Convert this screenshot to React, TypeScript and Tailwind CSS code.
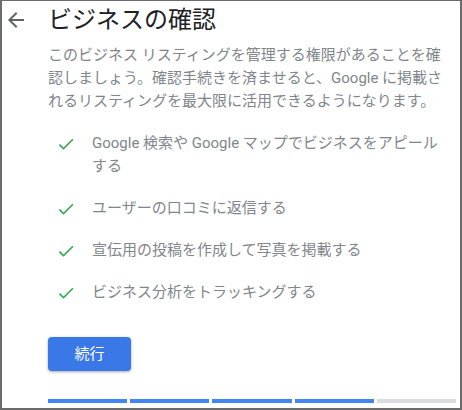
import { ReactNode } from 'react';

const font = { fontFamily: "Roboto, 'Noto Sans CJK JP', sans-serif" };

const CheckIcon = () => (
  <svg viewBox="0 0 24 24" className="h-5 w-5 shrink-0 fill-[#34a853]">
    <path d="M9 16.17L4.83 12l-1.42 1.41L9 19 21 7l-1.41-1.41z" />
  </svg>
);

const BackArrow = () => (
  <svg viewBox="0 0 24 24" className="h-6 w-6 fill-[#5f6368]">
    <path d="M20 11H7.83l5.59-5.59L12 4l-8 8 8 8 1.41-1.41L7.83 13H20v-2z" />
  </svg>
);

const items: ReactNode[] = [
  <>
    Google 検索や Google マップでビジネスをアピール
    <br />
    する
  </>,
  'ユーザーの口コミに返信する',
  '宣伝用の投稿を作成して写真を掲載する',
  'ビジネス分析をトラッキングする',
];

const steps = [true, true, true, true, false];

export default function App() {
  return (
    <div
      style={font}
      className="w-[462px] h-[410px] bg-white border-2 border-t border-[#6b6b6b] overflow-hidden"
    >
      {/* header */}
      <div className="flex items-center pt-[3px]">
        <div className="w-[46px] pl-[2px] flex items-center">
          <BackArrow />
        </div>
        <h1 className="text-[24px] leading-8 text-[#202124]">ビジネスの確認</h1>
      </div>

      <div className="pl-[46px]">
        <p className="mt-[8px] text-[15px] leading-[23px] text-[#80868b] whitespace-nowrap">
          このビジネス リスティングを管理する権限があることを確
          <br />
          認しましょう。確認手続きを済ませると、Google に掲載さ
          <br />
          れるリスティングを最大限に活用できるようになります。
        </p>

        <ul className="mt-[19px] flex flex-col gap-[19px]">
          {items.map((item, i) => (
            <li key={i} className="flex items-start">
              <div className="w-[44px] pl-[8px] pt-[2px]">
                <CheckIcon />
              </div>
              <span className="text-[15px] leading-[23px] text-[#80868b] whitespace-nowrap">
                {item}
              </span>
            </li>
          ))}
        </ul>

        <button className="mt-[33px] w-[83px] h-[34px] rounded-[4px] bg-[#3b78e7] text-white text-[15px] shadow-[0_1px_3px_rgba(0,0,0,0.35)]">
          続行
        </button>

        <div className="mt-[28px] flex gap-[3px] w-[408px]">
          {steps.map((done, i) => (
            <div
              key={i}
              className={done ? 'flex-1 h-[4px] bg-[#4285f4]' : 'flex-1 h-[4px] bg-[#dadce0]'}
            />
          ))}
        </div>
      </div>
    </div>
  );
}
